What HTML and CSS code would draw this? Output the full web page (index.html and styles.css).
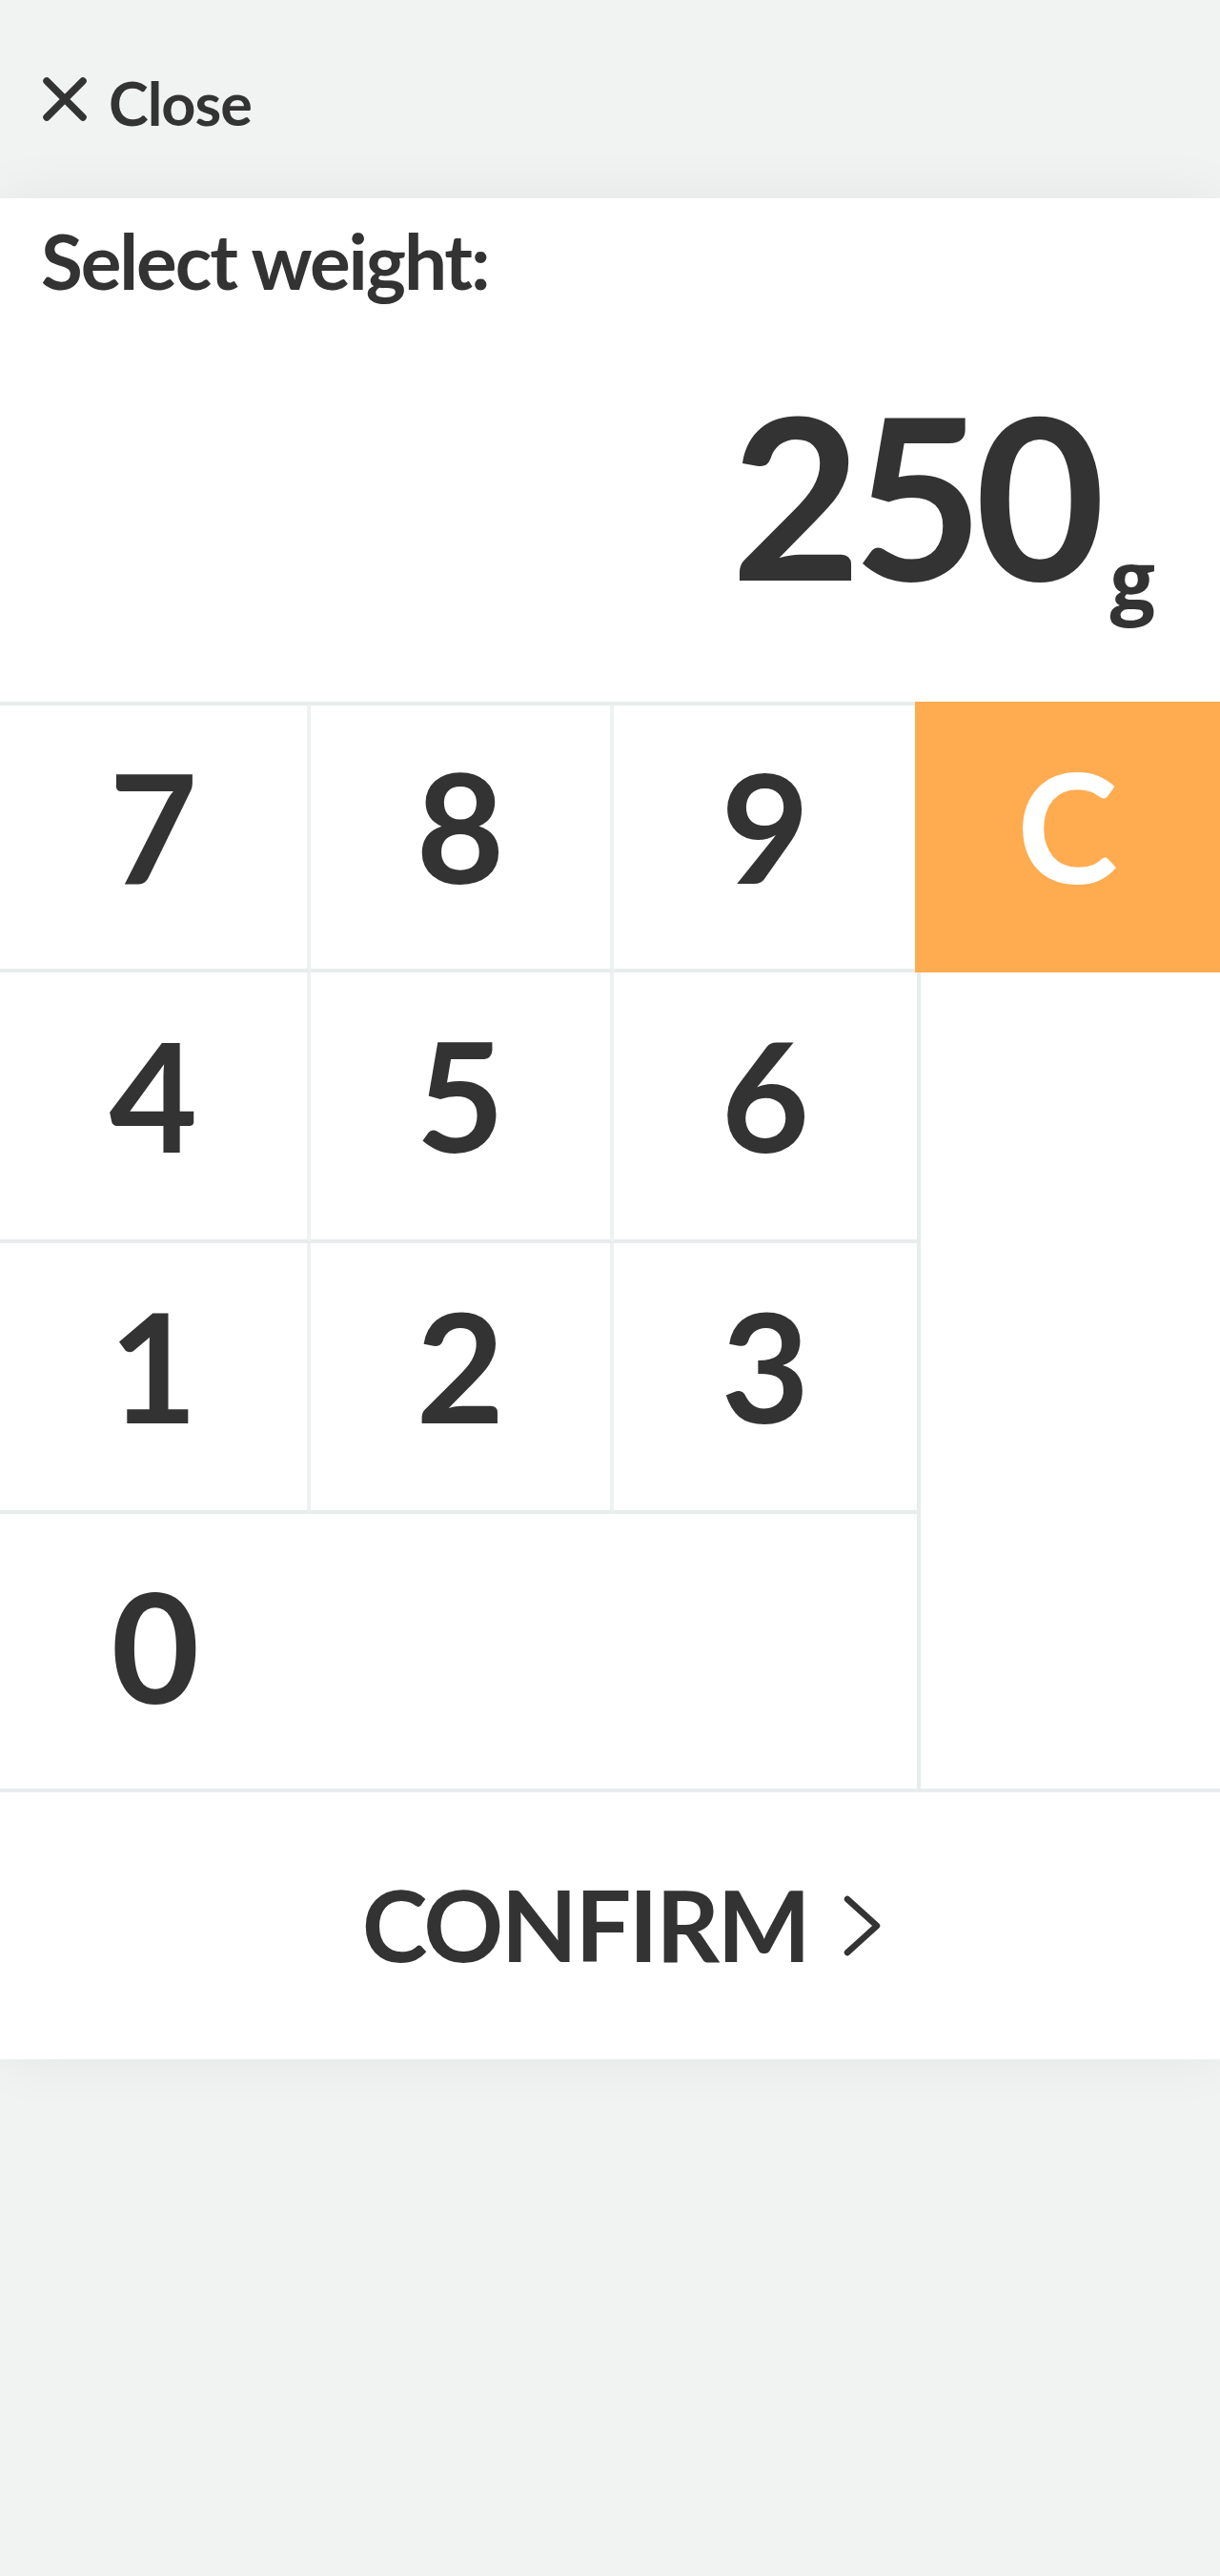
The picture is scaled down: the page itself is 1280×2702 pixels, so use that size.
FILE: index.html
```html
<!DOCTYPE html>
<html lang="en">
<head>
<meta charset="utf-8">
<title>Select weight</title>
<link rel="stylesheet" href="styles.css">
</head>
<body>
<header class="topbar">
  <button class="close-btn" type="button">
    <svg class="close-icon" width="48" height="48" viewBox="0 0 48 48" aria-hidden="true">
      <path d="M5 5 L43 43 M43 5 L5 43" stroke="#333333" stroke-width="7.5" stroke-linecap="round" fill="none"/>
    </svg>
    <span class="close-label">Close</span>
  </button>
</header>
<main class="panel">
  <h1 class="title">Select weight:</h1>
  <div class="display"><span class="amount">250</span><span class="unit">g</span></div>
  <div class="keypad">
    <div class="keys">
      <button class="key" type="button">7</button>
      <button class="key" type="button">8</button>
      <button class="key key-last" type="button">9</button>
      <button class="key" type="button">4</button>
      <button class="key" type="button">5</button>
      <button class="key key-last" type="button">6</button>
      <button class="key" type="button">1</button>
      <button class="key" type="button">2</button>
      <button class="key key-last" type="button">3</button>
      <button class="key key-zero" type="button">0</button>
      <div class="key-empty"></div>
    </div>
    <div class="side">
      <button class="clear" type="button">C</button>
      <div class="side-fill"></div>
    </div>
  </div>
  <button class="confirm" type="button">
    <span class="confirm-label">CONFIRM</span>
    <svg class="chevron" width="42" height="66" viewBox="0 0 42 66" aria-hidden="true">
      <path d="M5 5 L36 33 L5 61" stroke="#333333" stroke-width="6.5" stroke-linecap="round" stroke-linejoin="round" fill="none"/>
    </svg>
  </button>
</main>
</body>
</html>
```

FILE: styles.css
```css
html, body {
  margin: 0;
  padding: 0;
  background: #f1f3f3;
}

body {
  min-height: 2702px;
  font-family: "Lato", "Open Sans", "Liberation Sans", sans-serif;
  color: #333333;
}

button {
  font-family: inherit;
  color: inherit;
  background: none;
  border: 0;
  padding: 0;
  margin: 0;
  cursor: pointer;
}

.topbar {
  height: 208px;
  display: flex;
  align-items: center;
  padding-left: 44px;
  box-sizing: border-box;
}

.close-btn {
  display: flex;
  align-items: center;
  gap: 22px;
}

.close-icon {
  display: block;
  width: 48px;
  height: 48px;
}

.close-label {
  font-size: 63px;
  font-weight: 700;
  line-height: 1;
  letter-spacing: -1px;
  padding-top: 6px;
}

.panel {
  background: #ffffff;
  box-shadow: 0 0 58px rgba(0, 20, 20, 0.06);
  display: flex;
  flex-direction: column;
}

.title {
  margin: 0;
  padding: 25px 0 0 43px;
  font-size: 80px;
  font-weight: 700;
  line-height: 1;
  letter-spacing: -2.1px;
}

.display {
  margin-top: 87px;
  height: 240px;
  text-align: right;
  padding-right: 68px;
  font-size: 236px;
  line-height: 1;
  font-weight: 700;
  margin-bottom: 96px;
}

.amount {
  letter-spacing: -9px;
}

.unit {
  font-family: "Open Sans", "Lato", sans-serif;
  font-size: 84px;
  line-height: 0;
  vertical-align: -30px;
  margin-left: 14px;
}

.keypad {
  display: flex;
}

.keys {
  width: 962px;
  display: grid;
  grid-template-columns: 326px 318px 318px;
  grid-template-rows: 276px 280px 280px 288px;
  row-gap: 4px;
  border-top: 4px solid #e8ecec;
}

.key {
  display: flex;
  align-items: center;
  justify-content: center;
  font-size: 160px;
  font-weight: 700;
  line-height: 1;
  padding-bottom: 26px;
  box-sizing: border-box;
  border-right: 4px solid #eef1f1;
  border-bottom: 4px solid #e8ecec;
  margin-bottom: -4px;
}

.key-last {
  border-right: 0;
}

.key-zero {
  border-right: 0;
  border-bottom: 0;
  margin-bottom: 0;
  padding-bottom: 14px;
}

.key-empty {
  grid-column: 2 / span 2;
}

.side {
  flex: 1;
  display: flex;
  flex-direction: column;
}

.clear {
  height: 284px;
  margin-left: -2px;
  background: #ffab50;
  color: #ffffff;
  font-size: 160px;
  font-weight: 700;
  line-height: 1;
  padding-bottom: 26px;
  display: flex;
  align-items: center;
  justify-content: center;
  box-sizing: border-box;
}

.side-fill {
  flex: 1;
  border-left: 4px solid #e8ecec;
}

.confirm {
  height: 284px;
  border-top: 4px solid #e8ecec;
  box-sizing: border-box;
  display: flex;
  align-items: center;
  justify-content: center;
  gap: 36px;
  padding-left: 26px;
  width: 100%;
}

.confirm-label {
  font-size: 104px;
  font-weight: 700;
  line-height: 1;
  letter-spacing: -2.5px;
  padding-bottom: 4px;
}

.chevron {
  display: block;
  width: 42px;
  height: 66px;
}
```
